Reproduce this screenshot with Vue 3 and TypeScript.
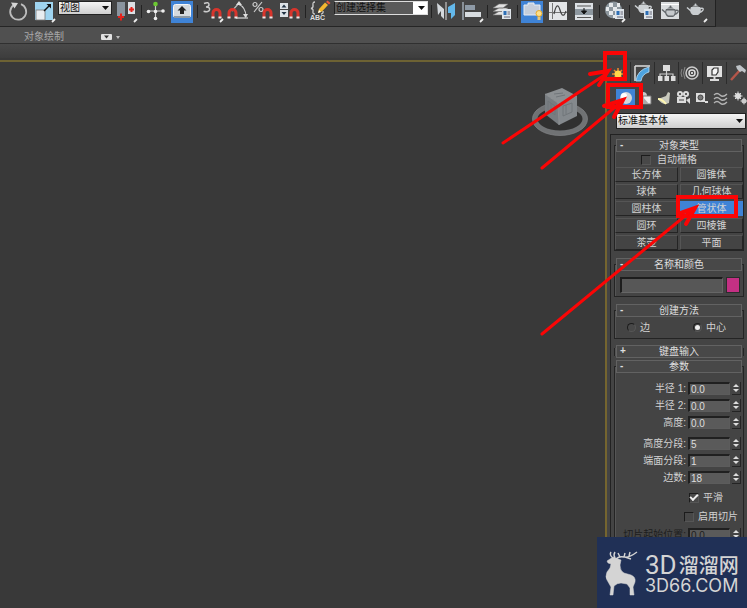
<script setup lang="ts">
import { ref } from 'vue'

interface Tool {
  kind: 'tool' | 'sep' | 'view' | 'sets'
  label?: string
  icon?: string
  on?: boolean
}

const magnet = (x: number, y: number) =>
  `<path d="M${x} ${y + 9}V${y + 4}a3.500 3.500 0 0 1 7 0v5" fill="none" stroke="#d8352c" stroke-width="3"/>
   <path d="M${x - 1.5} ${y + 8.4}h3M${x + 5.5} ${y + 8.4}h3" stroke="#e8e8e8" stroke-width="2"/>`
const corner = '<path d="M21 22l3-3" stroke="#eee" stroke-width="1.8"/>'
const sheet = (x: number, y: number) =>
  `<rect x="${x}" y="${y}" width="9" height="10" fill="#dfe5ea"/><rect x="${x + 1.5}" y="${y + 2}" width="3" height="4" fill="#2d6fb5"/><path d="M${x + 5.5} ${y + 3}h2.5M${x + 5.5} ${y + 5}h2.5M${x + 2} ${y + 8}h6" stroke="#667"/>`
const pot = (x: number, y: number, c: string) =>
  `<path d="M${x + 4} ${y + 4}h9c2 4 0 7-2 8h-5c-2-1-4-4-2-8z" fill="${c}"/><path d="M${x + 5} ${y + 3.4}q3.500-3 7 0z" fill="${c}"/><circle cx="${x + 8.5}" cy="${y + 1.4}" r="1" fill="${c}"/><path d="M${x + 4} ${y + 8}l-4-3.500M${x + 13} ${y + 5.5}q4-1 3 1.500q-1 2-4 2.500" fill="none" stroke="${c}" stroke-width="1.500"/>`

const art: Record<string, string> = {
  rotate: '<path d="M16 4.200a8 8 0 1 1-7.500 1" fill="none" stroke="#bdbdbd" stroke-width="1.800"/><path d="M6 2.500l7 .5-3.500 5.500z" fill="#d5d5d5"/>',
  scale: '<rect x="4" y="2" width="18" height="18" fill="#9fd4f0"/><rect x="5" y="10" width="9" height="10" fill="#e9edf0" stroke="#777" stroke-width=".8"/><path d="M13 11l6-6" stroke="#111" stroke-width="1.400"/><path d="M15.500 4h4.500v4.500z" fill="#111"/>' + corner,
  pivot: '<rect x="4" y="2" width="8" height="14" fill="#8a949e"/><rect x="15" y="2" width="7" height="12" fill="#dce0e4"/><path d="M8 13.500v7M5 17h6" stroke="#e5221b" stroke-width="2"/><path d="M18.500 7v5M16 9.500h5" stroke="#e5221b" stroke-width="2"/>' + corner,
  manip: '<path d="M12.500 4v15M5 11h15" stroke="#ccc" stroke-width="1.200"/><circle cx="12.500" cy="4" r="2.300" fill="#6cc832"/><circle cx="12.500" cy="11.500" r="1.800" fill="#eee"/><circle cx="12.500" cy="18.500" r="1.800" fill="#eee"/><circle cx="5.500" cy="11.500" r="1.800" fill="#eee"/><circle cx="20" cy="11" r="1.800" fill="#eee"/>',
  keys: '<rect x="4.500" y="4.500" width="17" height="13" rx="2" fill="#d5dade" stroke="#f7f7f7"/><path d="M5 16h16v2H5z" fill="#8b98a4"/><path d="M13 6l4.500 4.500H15V14h-4v-3.500H8.500z" fill="#222"/>',
  snap: '<path d="M5 3.500q5-2 5 1.200q0 2-3 2.200q4 .2 3.600 2.800q-.8 3-6 1.500" fill="none" stroke="#ccc" stroke-width="1.500"/>' + magnet(14, 9) + corner,
  angle: '<path d="M7 11L14 3M11 18h12" stroke="#bbb" stroke-width="1.300"/><path d="M13 4q8 3 8 13" fill="none" stroke="#ccc" stroke-width="1.200"/><path d="M11 5l3-4 3 4zM18 14h5l-2.500 4z" fill="#ddd"/>' + magnet(4, 9),
  percent: '<circle cx="4" cy="4.500" r="2" fill="none" stroke="#ccc" stroke-width="1.200"/><circle cx="10" cy="9.500" r="2" fill="none" stroke="#ccc" stroke-width="1.200"/><path d="M11 2L3 12" stroke="#ccc" stroke-width="1.200"/>' + magnet(13, 9),
  spin: '<rect x="3" y="3" width="8" height="6" fill="#dde2e6"/><rect x="3" y="10" width="8" height="7" fill="#dde2e6"/><path d="M4.500 7.500L7 4.500l2.500 3zM4.500 12L7 15l2.500-3z" fill="#234"/>' + magnet(14, 9),
  named: '<path d="M8 2q-2.500 0-2 3t-2 3.500q2.500 .5 2 3t2 2.500M14 14q2.500 0 2-3" fill="none" stroke="#ccc" stroke-width="1.300"/><path d="M11 13l1-4 6-6.500 3 2.500-6 6.500z" fill="#f3b72f"/><path d="M19 2l1.500-1.500 3 2.500-1.500 1.500z" fill="#e5573b"/><path d="M11 13l1-3 2 2z" fill="#fff"/>',
  mirror: '<path d="M4 3l7 6v10l-3-3v-5l-3 4z" fill="#d3d8dc"/><path d="M13 2v18" stroke="#ddd"/><path d="M22 3l-7 4v6h3v6l4-4z" fill="#63b8ea"/>',
  align: '<path d="M4 2v18" stroke="#b8c4d0" stroke-width="1.200"/><rect x="6" y="5" width="10" height="5" fill="#8e9aa6"/><rect x="6" y="12" width="16" height="5" fill="#d8dde1"/>' + corner,
  layers: '<path d="M4 15l6-3.500h9l-5 3.500zM4 11.500L10 8h9l-5 3.500zM4 8l6-4h9l-5 4z" fill="#e2e2e2" stroke="#777" stroke-width=".6"/>' + sheet(13, 9),
  ribbon: '<path d="M5 5h4V3h6v2h6v10H5z" fill="#c5cedb" stroke="#e8edf3"/><circle cx="20" cy="13.500" r="3" fill="#ffe08a" stroke="#e6a92c"/><rect x="18.500" y="17" width="3" height="3" fill="#e8c77b"/>',
  curve: '<rect x="4" y="2" width="18" height="18" fill="#e4e6e8"/><path d="M7.500 3v16M4 12.500h18" stroke="#777"/><path d="M9 14q3-14 6-4q3 10 6 1" fill="none" stroke="#444" stroke-width="1.200"/>',
  schem: '<rect x="4" y="3" width="18" height="6" fill="#dce0e4"/><rect x="4" y="15" width="18" height="5" fill="#dce0e4"/><path d="M4 9v6h18V9" fill="#8d979f"/><path d="M6 6h14M6 17.500h14" stroke="#555"/><path d="M13 8v4M10.500 11h5L13 14z" fill="#111" stroke="#111"/>',
  material: '<circle cx="12.500" cy="10" r="8.500" fill="#8c969d"/><path d="M8 3h4v4H8zM16 3h3v4h-3zM12 7h4v4h-4zM5 7h3v4H5zM8 11h4v4H8zM12 15h4v3h-4z" fill="#e5e8ea"/>' + sheet(14, 9) + corner,
  setup: pot(4, 1, '#cdd1d4') + sheet(13, 9),
  frame: '<rect x="4" y="2" width="18" height="17" fill="#d9dcde"/><path d="M4 4.500h18" stroke="#fff"/>' + pot(5, 5, '#62676b') + '<path d="M9.500 10.500h8q1 3-1 5h-5q-3-2-2-5z" fill="#c5c9cc"/>',
  render: pot(4, 3, '#c9cdd0') + corner,
}

const t = (icon: string, label: string, on = false): Tool => ({ kind: 'tool', icon, label, on })
const sep: Tool = { kind: 'sep' }
const tools: Tool[] = [
  t('rotate', '旋转'), t('scale', '缩放'), { kind: 'view' }, t('pivot', '轴点'), sep,
  t('manip', '操纵'), t('keys', '快捷键', true), sep,
  t('snap', '捕捉'), t('angle', '角度捕捉'), t('percent', '百分比捕捉'), t('spin', '微调器捕捉'), sep,
  t('named', '编辑选择集'), { kind: 'sets' }, sep,
  t('mirror', '镜像'), t('align', '对齐'), sep, t('layers', '层管理器'), sep,
  t('ribbon', '功能区', true), t('curve', '曲线编辑器'), t('schem', '图解视图'), sep,
  t('material', '材质编辑器'), sep, t('setup', '渲染设置'), t('frame', '渲染帧窗口'), t('render', '渲染'),
]

const tabs = [
  { label: '创建', icon: '<path d="M11 5v12M5 11h12M7 7l8 8M15 7l-8 8" stroke="#e8842c" stroke-width="1.600"/><circle cx="11" cy="11" r="3.500" fill="#ffd84a"/>' },
  { label: '修改', icon: '<path d="M4 3h15M4 3v15" stroke="#ddd" stroke-width="1.500"/><path d="M5 18Q6 7 18 4v5q-7 2-8 9z" fill="#4da3e0" stroke="#b9e0f8" stroke-width=".8"/>' },
  { label: '层次', icon: '<rect x="8" y="2" width="7" height="6" fill="#ddd"/><path d="M11.500 8v5M5 14v-3h13v3" fill="none" stroke="#ccc" stroke-width="1.200"/><rect x="3" y="13" width="4.500" height="5" fill="#ddd"/><rect x="9.500" y="13" width="4.500" height="5" fill="#ddd"/><rect x="16" y="13" width="4.500" height="5" fill="#ddd"/>' },
  { label: '运动', icon: '<circle cx="13" cy="10" r="6" fill="none" stroke="#ccc" stroke-width="1.500"/><circle cx="13" cy="10" r="3" fill="none" stroke="#ddd" stroke-width="1.500"/><circle cx="13" cy="10" r="1" fill="#fff"/><path d="M6 4q-3 6 0 12M3 6q-2 4 0 8" fill="none" stroke="#888"/>' },
  { label: '显示', icon: '<rect x="4" y="3" width="15" height="11" fill="#e2e2e2"/><path d="M9 7l2-2h4v4l-2 3H9z" fill="#f7f7f7" stroke="#333" stroke-width="1.200"/><path d="M7 17h9M11.500 14v3" stroke="#ddd" stroke-width="2"/>' },
  { label: '工具', icon: '<path d="M4 17L14 6" stroke="#b5564a" stroke-width="2.500"/><path d="M9 3l4-1 6 5-1 3-3-2-2 1-3-3z" fill="#bfc4c8"/>' },
]

const categories = [
  { label: '几何体', on: true, icon: '<circle cx="10" cy="9" r="6" fill="#d4d8db"/><circle cx="8" cy="7" r="3" fill="#fff"/>' },
  { label: '图形', icon: '<circle cx="8" cy="7" r="4" fill="#c9c9c9"/><path d="M8 7h8v8H8z" fill="#eee" stroke="#777"/><path d="M8 15V8l6 7z" fill="#aaa"/>' },
  { label: '灯光', icon: '<path d="M4 10l8-3 2-4 2 1-1 10-3 1q-5 0-8-5z" fill="#c9c9bd"/><path d="M4 10q4 0 8 5" stroke="#fff7b0" stroke-width="2" fill="none"/>' },
  { label: '摄影机', icon: '<circle cx="7" cy="5" r="3" fill="#ddd"/><circle cx="13" cy="5" r="3" fill="#ddd"/><rect x="4" y="8" width="9" height="6" fill="#ddd"/><path d="M13 11l4-2v6z" fill="#ddd"/><circle cx="7" cy="5" r="1" fill="#333"/><circle cx="13" cy="5" r="1" fill="#333"/><path d="M6 11h5" stroke="#444"/>' },
  { label: '辅助对象', icon: '<rect x="4" y="4" width="9" height="9" fill="#ddd"/><circle cx="8.500" cy="8.500" r="2.500" fill="#777" stroke="#444"/><path d="M13 13h3" stroke="#ddd" stroke-width="2"/>' },
  { label: '空间扭曲', icon: '<path d="M3 6q3-3 6 0t7-1M3 10q3-3 6 0t7-1M3 14q3-3 6 0t7-1" fill="none" stroke="#b5b5b5" stroke-width="1.300"/>' },
  { label: '系统', icon: '<circle cx="8" cy="7" r="3" fill="#ddd"/><path d="M8 2.500v9M3.500 7h9M5 4l6 6M11 4l-6 6" stroke="#ddd"/><circle cx="14" cy="12" r="2.500" fill="#ccc"/><path d="M14 8.500v7M10.500 12h7" stroke="#ccc"/>' },
]

const shapes = ['长方体', '圆锥体', '球体', '几何球体', '圆柱体', '管状体', '圆环', '四棱锥', '茶壶', '平面']
const active = ref('管状体')
const autoGrid = ref(false)
const method = ref('center')
const smooth = ref(true)
const slice = ref(false)
const groups = ref([
  [
    { id: 'r1', label: '半径 1:', value: '0.0' },
    { id: 'r2', label: '半径 2:', value: '0.0' },
    { id: 'h', label: '高度:', value: '0.0' },
  ],
  [
    { id: 'hs', label: '高度分段:', value: '5' },
    { id: 'cs', label: '端面分段:', value: '1' },
    { id: 'sides', label: '边数:', value: '18' },
  ],
])
</script>

<template>
  <div class="app">
    <header class="toolbar">
      <template v-for="(item, i) in tools" :key="i">
        <span v-if="item.kind === 'sep'" class="sep"></span>
        <label v-else-if="item.kind === 'view'" class="drop view">
          <select aria-label="参考坐标系"><option>视图</option></select>
          <svg viewBox="0 0 7 4"><path d="M0 0h7L3.500 4z" /></svg>
        </label>
        <label v-else-if="item.kind === 'sets'" class="drop sets">
          <select aria-label="命名选择集"><option>创建选择集</option></select>
          <svg viewBox="0 0 7 4"><path d="M0 0h7L3.500 4z" /></svg>
        </label>
        <button v-else class="tool" :class="{ on: item.on }" :aria-label="item.label">
          <svg viewBox="0 0 26 24" v-html="art[item.icon!]"></svg>
          <span v-if="item.icon === 'named'" class="abc">ABC</span>
        </button>
      </template>
    </header>
    <nav class="ribbon">
      <button class="paint">对象绘制</button>
      <button class="toggle" aria-label="最小化">
        <svg viewBox="0 0 20 8"><rect y="1" width="11" height="6" rx="1" fill="#e2e2e2" /><path d="M3 2.500h5L5.500 5.500z" fill="#333" /><path d="M15 3h4l-2 3z" fill="#bbb" /></svg>
      </button>
    </nav>
    <div class="strip"></div>
    <div class="main">
      <main class="viewport">
        <svg class="cube" viewBox="0 0 60 52">
          <ellipse cx="30" cy="32" rx="25" ry="14" fill="#303030" stroke="#707274" stroke-width="5" />
          <ellipse cx="30" cy="32" rx="27.500" ry="16.500" fill="none" stroke="#828486" stroke-width=".7" />
          <path d="M15 7l17-6 15 8-19 7z" fill="#8c9093" />
          <path d="M15 7l13 9 1 22-14-11z" fill="#787d81" />
          <path d="M28 16l19-7v20l-18 9z" fill="#84898d" />
          <path d="M18 14l7 5v9l-7-5zM33 19l9-3v9l-9 4zM36 18v9M21 16v9M24 7l9-1M26 10l9-2" fill="none" stroke="#71767a" />
          <path d="M15 7l13 9 19-7M28 16l1 22" fill="none" stroke="#94989b" stroke-width=".8" />
        </svg>
      </main>
      <aside class="panel">
        <div class="tabs">
          <button v-for="tab in tabs" :key="tab.label" :aria-label="tab.label"><svg viewBox="0 0 23 20" v-html="tab.icon"></svg></button>
        </div>
        <div class="cats">
          <button v-for="cat in categories" :key="cat.label" :class="{ on: cat.on }" :aria-label="cat.label"><svg viewBox="0 0 19 18" v-html="cat.icon"></svg></button>
        </div>
        <label class="drop type">
          <select aria-label="对象类别"><option>标准基本体</option></select>
          <svg viewBox="0 0 7 4"><path d="M0 0h7L3.500 4z" /></svg>
        </label>
        <div class="rollouts">
          <section class="rollout">
            <button class="head"><i>-</i>对象类型</button>
            <label class="check auto"><input v-model="autoGrid" type="checkbox" />自动栅格</label>
            <div class="shapes">
              <button v-for="s in shapes" :key="s" :class="{ on: s === active }" @click="active = s">{{ s }}</button>
            </div>
          </section>
          <section class="rollout">
            <button class="head"><i>-</i>名称和颜色</button>
            <div class="name">
              <input type="text" aria-label="名称" />
              <button class="swatch" aria-label="对象颜色"></button>
            </div>
          </section>
          <section class="rollout">
            <button class="head"><i>-</i>创建方法</button>
            <div class="methods">
              <label class="check"><input v-model="method" type="radio" value="edge" />边</label>
              <label class="check"><input v-model="method" type="radio" value="center" />中心</label>
            </div>
          </section>
          <section class="rollout closed">
            <button class="head"><i>+</i>键盘输入</button>
          </section>
          <section class="rollout params">
            <button class="head"><i>-</i>参数</button>
            <div v-for="(rows, g) in groups" :key="g" class="group">
              <div v-for="row in rows" :key="row.id" class="field">
                <label :for="row.id">{{ row.label }}</label>
                <input :id="row.id" v-model="row.value" type="text" />
                <span class="spin"></span>
              </div>
            </div>
            <label class="check smooth"><input v-model="smooth" type="checkbox" />平滑</label>
            <label class="check slice"><input v-model="slice" type="checkbox" />启用切片</label>
            <div class="field off">
              <label for="from">切片起始位置:</label>
              <input id="from" type="text" value="0.0" disabled />
              <span class="spin"></span>
            </div>
          </section>
        </div>
      </aside>
    </div>
    <svg class="marks" viewBox="0 0 260 350">
      <path d="M118 53h20v26h-20zM121 85h33v22h-33zM191 197h58v19h-58z" stroke-width="4" />
      <path d="M16 143L119 74M55 168L133 103M55 334L204 211" stroke-width="3" />
      <path d="M103 74l18-3-9 14M117 106l19-6-9 17M191 214l17-6-9 16" stroke-width="4" />
    </svg>
    <footer class="brand">
      <svg class="deer" viewBox="0 0 34 46">
        <path d="M8 6L2 10l1 2 3 1-1 4-3 4q-2 5 0 8l4 7-1 8h3l1-9q3-3 7-3l6 1 3 4v7h4l-1-8 2-5q1-5-4-7l-7-2q-4-2-4-8l1-5z" />
        <path d="M8 7Q4 4 6 1M10 7Q8 4 10 1M11 8q3-3 8-2t13-5M15 6l-2-4M19 6l1-4M24 5l1-4M20 6l6 2" fill="none" stroke-width="1.400" />
      </svg>
      <div class="words">
        <div class="cn"><span>3D</span>溜溜网</div>
        <div class="url">3D66.COM</div>
      </div>
    </footer>
  </div>
</template>

<style>
body { background: #393939; }
</style>

<style scoped>
.app { position: relative; display: flex; flex-direction: column; height: 100vh; overflow: hidden; background: #393939; color: #d2d2d2; font: 10px/12px "Liberation Sans", "Noto Sans CJK SC", sans-serif; }
.app * { box-sizing: border-box; }
button, input, select { margin: 0; padding: 0; border: 0; border-radius: 0; background: none; color: inherit; font: inherit; }
button { display: block; }
svg { display: block; }

.toolbar { display: flex; flex: none; align-self: flex-start; height: 27px; padding: 0 6px 0 5px; border-right: 1px solid #222; border-bottom: 1px solid #252525; background: #444; }
.tool { position: relative; flex: none; width: 26px; height: 24px; }
.tool svg { width: 26px; height: 24px; }
.tool.on { background: linear-gradient(#3f83d6, #3f83d6) center top 1px / 22px 22px no-repeat; }
.abc { position: absolute; left: 3px; bottom: 3px; font: bold 7px/7px "Liberation Sans", sans-serif; color: #ddd; }
.sep { flex: none; width: 4px; height: 13px; margin-top: 5px; background: linear-gradient(#222, #222) center / 1px 100% no-repeat; }
.drop { display: grid; flex: none; height: 14px; margin-top: 1px; }
.drop > * { grid-area: 1 / 1; }
.drop select { appearance: none; width: 100%; height: 100%; padding: 0 1px; border: 1px solid #222; background: linear-gradient(#f5f5f5, #cfcfcf); color: #111; font-size: 10px; line-height: 12px; }
.drop svg { place-self: center end; width: 7px; height: 4px; margin-right: 3px; pointer-events: none; fill: #111; }
.view { width: 54px; margin-left: 1px; margin-right: 1px; }
.sets { width: 94px; margin-left: 1px; margin-right: 1px; }
.sets select { border-color: #ddd; border-left-color: #222; background: linear-gradient(90deg, #5a5a5a calc(100% - 14px), #fff 0); }

.ribbon { display: flex; flex: none; align-items: center; gap: 37px; height: 17px; padding: 3px 24px 0; border-bottom: 1px solid #303030; background: #505050; }
.paint { color: #a9a9a9; }
.toggle svg { width: 20px; height: 8px; }
.strip { flex: none; height: 14px; background: linear-gradient(#494949, #3d3d3d); }

.main { display: flex; flex: 1; min-height: 0; }
.viewport { position: relative; flex: 1; margin-top: 2px; border-top: 2px solid #6d6233; background: #393939; }
.cube { position: absolute; top: 25px; right: 15px; width: 60px; height: 52px; }
.panel { display: flex; flex: none; flex-direction: column; width: 142px; margin-top: 2px; padding-top: 2px; border-left: 2px solid #75652f; background: #444; }
.tabs { display: grid; grid-template-columns: repeat(6, 1fr); flex: none; height: 22px; }
.tabs button { border-right: 1px solid #2c2c2c; }
.tabs svg { width: 23px; height: 20px; }
.cats { display: grid; grid-template-columns: repeat(7, 1fr); flex: none; height: 18px; margin: 5px 0 0 9px; }
.cats svg { width: 19px; height: 18px; }
.cats .on { background: #3f83d6; }
.type { height: 16px; margin: 6px 1px 0 9px; }

.rollouts { display: flex; flex: 1; flex-direction: column; gap: 13px; min-height: 0; margin: 5px 0 0 3px; padding: 10px 3px 0 3px; border-top: 1px solid #222; border-left: 1px solid #222; overflow: hidden; }
.rollout { flex: none; border: 1px solid #242424; box-shadow: inset 1px 0 #555; }
.head { position: relative; width: calc(100% - 2px); height: 13px; margin: -7px 1px 0; border: 1px solid #626262; background: #484848; color: #dedede; text-align: center; line-height: 11px; }
.head i { position: absolute; left: 3px; top: 0; font: bold 10px/10px "Liberation Sans", sans-serif; }
.check { display: flex; align-items: center; gap: 4px; height: 15px; }
.check input { appearance: none; display: grid; place-content: center; width: 10px; height: 10px; border: 1px solid #565656; border-top-color: #1c1c1c; border-left-color: #1c1c1c; background: #484848; }
.check input[type='checkbox']:checked::before { content: ""; width: 6px; height: 3px; margin-bottom: 2px; border: solid #eee; border-width: 0 0 2px 2px; transform: rotate(-45deg); }
.check input[type='radio'] { width: 9px; height: 9px; border-radius: 50%; }
.check input[type='radio']:checked::before { content: ""; width: 5px; height: 5px; border-radius: 50%; background: #eee; }
.auto { justify-content: center; gap: 6px; padding-right: 20px; }
.shapes { display: grid; grid-template-columns: 1fr 1fr; gap: 2px; }
.shapes button { height: 15px; border: 1px solid #242424; border-top-color: #555; border-left-color: #555; line-height: 13px; }
.shapes .on { border-color: #3f83d6; background: #3f83d6; }
.name { display: flex; gap: 3px; padding: 6px 3px 3px 5px; }
.name input { flex: 1; min-width: 0; height: 16px; border: 1px solid #666; border-top: 2px solid #1d1d1d; border-left: 2px solid #1d1d1d; background: #575757; }
.swatch { width: 14px; height: 16px; border: 1px solid #2c2c2c; background: #c43084; }
.methods { display: grid; grid-template-columns: 1fr 1fr; padding: 3px 0 3px 12px; }
.methods .check:last-child { padding-left: 8px; }
.closed { height: 8px; margin-top: -4px; margin-bottom: -3px; border-top: 0; border-bottom: 0; }
.closed .head { margin-top: -3px; }
.group { padding-top: 7px; }
.group + .group { padding-top: 4px; }
.field { display: flex; align-items: center; justify-content: flex-end; gap: 2px; height: 17px; padding-right: 2px; white-space: nowrap; }
.field input { width: 42px; height: 13px; padding-left: 1px; border: 1px solid #5c5c5c; border-top: 2px solid #202020; border-left: 2px solid #202020; background: #5a5a5a; color: #ddd; line-height: 10px; }
.spin { display: grid; align-content: space-between; justify-content: center; width: 9px; height: 13px; padding: 2px 0; border-right: 1px solid #242424; border-bottom: 1px solid #242424; }
.spin::before, .spin::after { content: ""; border: solid transparent; border-width: 0 3px 3px; border-bottom-color: #ddd; }
.spin::after { border-width: 3px 3px 0; border-top-color: #ddd; }
.params { min-height: 240px; }
.smooth, .slice { height: 19px; padding-left: 74px; }
.smooth { margin-top: 2px; }
.slice { padding-left: 69px; }
.off, .off input { color: #1d1d1d; }

.marks { position: absolute; top: 0; right: 0; width: 260px; height: 350px; pointer-events: none; fill: none; stroke: #fb0505; stroke-linecap: round; }
.brand { position: absolute; right: 0; bottom: 0; display: flex; align-items: center; gap: 6px; width: 150px; height: 71px; padding: 2px 8px 0; background: #203056; color: #d4d4d4; }
.deer { flex: none; width: 34px; height: 46px; fill: #d4d4d4; stroke: #d4d4d4; stroke-width: .5; }
.words { display: grid; gap: 2px; white-space: nowrap; }
.cn { display: flex; align-items: center; gap: 2px; height: 23px; font: 500 20px/20px "Noto Sans CJK SC", sans-serif; }
.cn span { font: 26px/22px Roboto, sans-serif; }
.url { font: 18px/16px Inter, sans-serif; }
</style>
